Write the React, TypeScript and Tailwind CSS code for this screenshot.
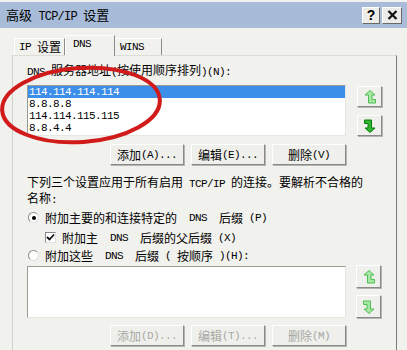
import React from 'react'

// 简单拆分：ASCII 用等宽半角，中文用 12px
const Txt = ({ s, big = false }: { s: string; big?: boolean }) => (
  <>
    {s
      .split(/([\x20-\x7e]+)/)
      .filter(Boolean)
      .map((p, i) =>
        /^[\x20-\x7e]+$/.test(p) ? (
          <span
            key={i}
            className={
              big
                ? "whitespace-pre font-['Liberation_Mono',monospace] text-[12px] tracking-[-0.8px]"
                : "whitespace-pre font-['Liberation_Mono',monospace] text-[11px] tracking-[-0.6px]"
            }
          >
            {p}
          </span>
        ) : (
          <span
            key={i}
            className={
              big
                ? "font-['Noto_Sans_CJK_SC',sans-serif] text-[13px]"
                : "font-['Noto_Sans_CJK_SC',sans-serif] text-[12px]"
            }
          >
            {p}
          </span>
        )
      )}
  </>
)

const Btn = ({ label, disabled = false }: { label: string; disabled?: boolean }) => (
  <div
    className={
      'flex h-[21px] w-[74px] items-center justify-center border border-t-white border-l-white border-r-[#8a8a8a] border-b-[#8a8a8a] bg-[#efefeb] shadow-[1px_1px_0_#b4b4b0] leading-[12px] ' +
      (disabled ? 'text-[#a8a8a4]' : 'text-black')
    }
  >
    <Txt s={label} />
  </div>
)

const ArrowBtn = ({ dir, active = false, h }: { dir: 'up' | 'down'; active?: boolean; h: string }) => (
  <div
    className={
      'flex w-[25px] items-center justify-center border border-t-white border-l-white border-r-[#8a8a8a] border-b-[#8a8a8a] bg-[#efefeb] shadow-[1px_1px_0_#b4b4b0] ' +
      h
    }
  >
    <svg width="12" height="14" viewBox="0 0 12 14">
      <polygon
        points="6,0.5 11,5 8,5 8,9.5 11.5,9.5 11.5,13 4.5,13 4.5,5 1,5"
        transform={dir === 'down' ? 'rotate(180 6 7)' : undefined}
        fill={active ? '#2fb52f' : '#a6e6a6'}
        stroke={active ? '#0d7a0d' : '#4fbf4f'}
        strokeWidth="1"
        strokeLinejoin="round"
      />
    </svg>
  </div>
)

const Radio = ({ checked }: { checked?: boolean }) => (
  <div className="flex h-[11px] w-[11px] items-center justify-center rounded-full border border-[#8a8a8a] border-b-[#e0e0e0] border-r-[#e0e0e0] bg-white">
    {checked && <div className="h-[4px] w-[4px] rounded-full bg-black" />}
  </div>
)

const ListBox = ({ items, h }: { items: string[]; h: string }) => (
  <div className={'w-[319px] border border-[#9a9a96] border-b-[#e6e6e2] border-r-[#e6e6e2] bg-white ' + h}>
    {items.map((it, i) => (
      <div
        key={it}
        className={
          'h-[12px] pl-[1px] leading-[12px] font-[\'Liberation_Mono\',monospace] text-[11px] tracking-[-0.6px] ' +
          (i === 0 ? 'bg-[#3d8ee8] text-white' : 'text-black')
        }
      >
        {it}
      </div>
    ))}
  </div>
)

export default function App() {
  return (
    <div className="relative h-[350px] w-[407px] overflow-hidden bg-[#f1f1ed] text-black">
      {/* 标题栏 */}
      <div className="mt-[2px] flex h-[26px] items-center justify-between bg-[#a8bcd9] pl-[6px] pr-[5px]">
        <div className="leading-[14px]">
          <Txt s="高级 TCP/IP 设置" big />
        </div>
        <div className="flex gap-[2px]">
          <div className="flex h-[17px] w-[18px] items-center justify-center border border-t-white border-l-white border-r-[#6a6a6a] border-b-[#6a6a6a] bg-[#ecece8] font-['Liberation_Sans',sans-serif] text-[14px] font-bold leading-none">
            ?
          </div>
          <div className="flex h-[17px] w-[20px] items-center justify-center border border-t-white border-l-white border-r-[#6a6a6a] border-b-[#6a6a6a] bg-[#ecece8]">
            <svg width="11" height="10" viewBox="0 0 11 10">
              <path d="M1.5 1 L9.5 9 M9.5 1 L1.5 9" stroke="#111" strokeWidth="2.2" />
            </svg>
          </div>
        </div>
      </div>

      {/* 选项卡 */}
      <div className="flex h-[27px] items-end pl-[14px]">
        <div className="flex h-[17px] w-[51px] items-center border-l border-t border-r border-l-white border-t-white border-r-[#8a8a8a] pl-[4px] leading-[12px]">
          <Txt s="IP 设置" />
        </div>
        <div className="relative z-10 -mb-[1px] flex h-[21px] w-[50px] items-start border-l border-t border-r border-l-white border-t-white border-r-[#8a8a8a] bg-[#f1f1ed] pl-[7px] pt-[2px] leading-[12px]">
          <Txt s="DNS" />
        </div>
        <div className="flex h-[17px] w-[47px] items-center border-t border-r border-t-white border-r-[#8a8a8a] pl-[5px] leading-[12px]">
          <Txt s="WINS" />
        </div>
      </div>

      {/* 面板 */}
      <div className="ml-[12px] h-[300px] w-[385px] border-l border-t border-r border-l-[#cfcfcb] border-t-[#dcdcd8] border-r-[#7a7a7a] pl-[14px]">
        <div className="mt-[7px] leading-[12px]">
          <Txt s="DNS 服务器地址(按使用顺序排列)(N):" />
        </div>

        <div className="mt-[7px] flex">
          <ListBox items={['114.114.114.114', '8.8.8.8', '114.114.115.115', '8.8.4.4']} h="h-[51px]" />
          <div className="ml-[11px] flex flex-col gap-[8px] pt-[1px]">
            <ArrowBtn dir="up" h="h-[21px]" />
            <ArrowBtn dir="down" active h="h-[21px]" />
          </div>
        </div>

        <div className="mt-[8px] flex w-[319px] justify-end gap-[7px]">
          <Btn label="添加(A)..." />
          <Btn label="编辑(E)..." />
          <Btn label="删除(V)" />
        </div>

        <div className="mt-[10px] leading-[13px]">
          <Txt s="下列三个设置应用于所有启用 TCP/IP 的连接。要解析不合格的" />
          <br />
          <Txt s="名称:" />
        </div>

        <div className="mt-[4px] flex h-[13px] items-center gap-[6px] pl-[1px] leading-[12px]">
          <Radio checked />
          <Txt s="附加主要的和连接特定的 DNS 后缀(P)" />
        </div>

        <div className="mt-[7px] flex h-[13px] items-center gap-[6px] pl-[18px] leading-[12px]">
          <div className="flex h-[11px] w-[11px] items-center justify-center border border-[#8a8a8a] border-b-[#e0e0e0] border-r-[#e0e0e0] bg-white">
            <svg width="9" height="9" viewBox="0 0 9 9">
              <path d="M1 4 L3.5 6.5 L8 1.5" stroke="#111" strokeWidth="1.8" fill="none" />
            </svg>
          </div>
          <Txt s="附加主 DNS 后缀的父后缀(X)" />
        </div>

        <div className="mt-[5px] flex h-[13px] items-center gap-[6px] pl-[1px] leading-[12px]">
          <Radio />
          <Txt s="附加这些 DNS 后缀(按顺序)(H):" />
        </div>

        <div className="mt-[4px] flex">
          <ListBox items={[]} h="h-[52px]" />
          <div className="ml-[10px] flex flex-col gap-[7px] -mt-[1px]">
            <ArrowBtn dir="up" h="h-[23px]" />
            <ArrowBtn dir="down" h="h-[23px]" />
          </div>
        </div>

        <div className="mt-[7px] flex w-[319px] justify-end gap-[7px]">
          <Btn label="添加(D)..." disabled />
          <Btn label="编辑(T)..." disabled />
          <Btn label="删除(M)" disabled />
        </div>

        <div className="mt-[10px] flex items-start">
          <div className="w-[151px] leading-[12px]">
            <Txt s="此连接的 DNS 后缀(S):" />
          </div>
          <div className="h-[20px] w-[168px] border border-[#8a8a8a] border-b-[#e6e6e2] border-r-[#e6e6e2] bg-white" />
        </div>
      </div>

      {/* 红色标注圈 */}
      <svg className="pointer-events-none absolute left-0 top-0" width="407" height="350">
        <ellipse
          cx="81"
          cy="105"
          rx="79"
          ry="37"
          transform="rotate(-4 81 105)"
          fill="none"
          stroke="#d11a1a"
          strokeWidth="4"
        />
      </svg>
    </div>
  )
}
